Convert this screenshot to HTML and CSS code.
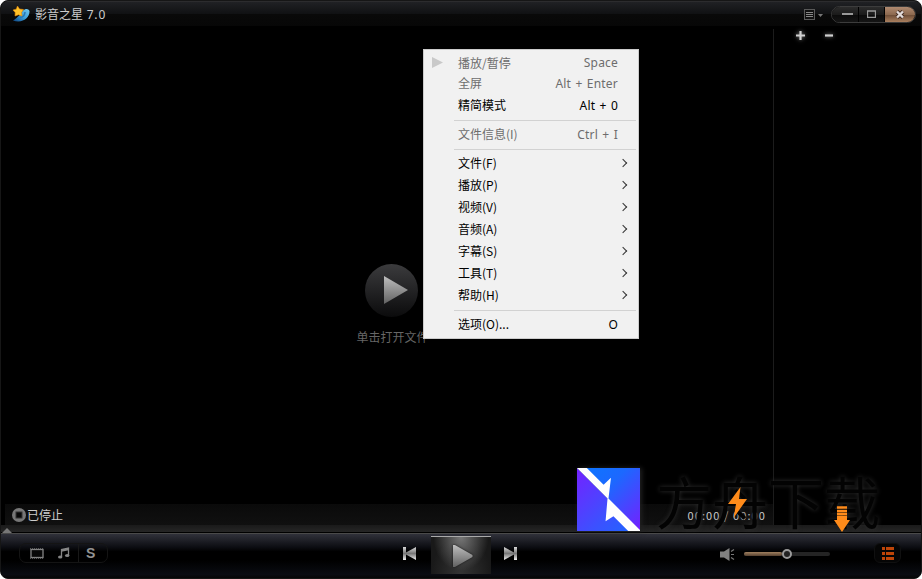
FILE: index.html
```html
<!DOCTYPE html>
<html lang="zh-CN">
<head>
    <meta charset="UTF-8">
    <meta name="viewport" content="width=device-width, initial-scale=1.0">
    <title>影音之星 7.0</title>
    <link rel="stylesheet" href="styles.css">
</head>
<body>
    <div class="player">
        <header class="titlebar">
            <svg class="logo" width="20" height="18" viewBox="0 0 20 18">
                <defs>
                    <linearGradient id="swoosh" x1="0" y1="1" x2="1" y2="0">
                        <stop offset="0" stop-color="#0b3f7c"/>
                        <stop offset=".5" stop-color="#3ba0dc"/>
                        <stop offset="1" stop-color="#75c9ee"/>
                    </linearGradient>
                </defs>
                <path d="M1 15.500C4 14 5 12 8 10C10 4 16 2 17.500 6C18 13 10 19 1 15.500Z" fill="url(#swoosh)"/>
                <path d="M8 12.500C11 12 13 10 13 7" fill="none" stroke="#2a79b5" stroke-width="1.500"/>
                <path d="M5.500 1L7.500 4L11.500 4.500L9.500 7.500L10 11L6.500 9.800L3 11L3.200 7.500L1 5L4.200 4.200Z" fill="#ffc229" stroke="#e58c09" stroke-width=".6"/>
            </svg>
            <h1 class="title">影音之星 <span class="version">7.0</span></h1>
            <svg class="menu-icon" width="20" height="11" viewBox="0 0 20 11">
                <rect x=".5" y=".5" width="10" height="10" fill="#111" stroke="#595959"/>
                <path d="M2 3.500H9M2 5.500H9M2 7.500H9" stroke="#888"/>
                <path d="M14 5H19L16.500 8Z" fill="#777"/>
            </svg>
            <div class="window-buttons">
                <button class="win-btn"><svg width="11" height="8"><path d="M0 4H11" stroke="#999" stroke-width="2"/></svg></button>
                <button class="win-btn"><svg width="9" height="8"><path d="M.5 1V7.500H8.500V1M0 1H9" fill="none" stroke="#999" stroke-width="1.300"/></svg></button>
                <button class="win-btn close"><svg width="10" height="9"><path d="M2 1.500L8 7.500M8 1.500L2 7.500" stroke="#422b20" stroke-width="4"/><path d="M2 1.500L8 7.500M8 1.500L2 7.500" stroke="#e4dcda" stroke-width="2.400"/></svg></button>
            </div>
        </header>

        <main class="content">
            <section class="video">
                <div class="open-file">
                    <svg width="53" height="53" viewBox="0 0 53 53">
                        <defs>
                            <linearGradient id="disc" x2="0" y2="1">
                                <stop offset="0" stop-color="#3b3b3d"/>
                                <stop offset="1" stop-color="#0b0b0c"/>
                            </linearGradient>
                            <linearGradient id="arrow" x2="0" y2="1">
                                <stop offset="0" stop-color="#bebebe"/>
                                <stop offset="1" stop-color="#626262"/>
                            </linearGradient>
                        </defs>
                        <circle cx="26.500" cy="26.500" r="26.500" fill="url(#disc)"/>
                        <path d="M19 12L43 26L19 40Z" fill="url(#arrow)"/>
                    </svg>
                    <p class="open-label">单击打开文件</p>
                </div>
                <div class="status">
                    <svg width="14" height="14"><circle cx="7" cy="7" r="7" fill="#777"/><rect x="4" y="4" width="6" height="6" fill="#080808" stroke="#333"/></svg>
                    <span class="state">已停止</span>
                    <span class="time">00:00 / 00:00</span>
                </div>
            </section>
            <aside class="playlist">
                <svg width="38" height="12" viewBox="0 0 38 12">
                    <path d="M0 5.500H9M4.500 1V10" stroke="#d0d0d0" stroke-width="2.200"/>
                    <path d="M29 5.500H37" stroke="#d0d0d0" stroke-width="2.200"/>
                </svg>
            </aside>
        </main>

        <div class="seekbar">
            <svg width="10" height="5"><path d="M0 5L5 0L10 5Z" fill="#777"/></svg>
        </div>

        <footer class="controls">
            <div class="modes">
                <svg class="mode" width="14" height="11" viewBox="0 0 14 11">
                    <rect x="1" y="1.500" width="12" height="8" fill="#080808" stroke="#858585" stroke-width="1.300"/>
                    <path d="M0 .8H14M0 10.200H14" stroke="#757575" stroke-dasharray="1 1"/>
                </svg>
                <svg class="mode" width="12" height="12" viewBox="0 0 12 12">
                    <path d="M3.500 10V2.500L10.500 1V8.500M3.500 4L10.500 2.500" fill="none" stroke="#858585" stroke-width="1.300"/>
                    <ellipse cx="2.200" cy="10" rx="2.200" ry="1.500" fill="#858585"/>
                    <ellipse cx="9.200" cy="8.600" rx="2.200" ry="1.500" fill="#858585"/>
                </svg>
                <span class="mode skin">S</span>
            </div>
            <div class="transport">
                <svg width="13" height="13" viewBox="0 0 13 13">
                    <defs>
                        <linearGradient id="metal" x2="0" y2="1">
                            <stop offset="0" stop-color="#d8d8d8"/>
                            <stop offset=".5" stop-color="#777"/>
                            <stop offset="1" stop-color="#eee"/>
                        </linearGradient>
                    </defs>
                    <path d="M0 0H3V5.500L13 0V13L3 7.500V13H0Z" fill="url(#metal)"/>
                </svg>
                <button class="play">
                    <svg width="20" height="22" viewBox="0 0 20 22"><path d="M0 0H2L19.500 10V12L2 22H0Z" fill="url(#arrow)"/></svg>
                </button>
                <svg class="next" width="13" height="13" viewBox="0 0 13 13"><path d="M13 0H10V5.500L0 0V13L10 7.500V13H13Z" fill="url(#metal)"/></svg>
            </div>
            <div class="volume">
                <svg width="15" height="13" viewBox="0 0 15 13">
                    <path d="M0 3.500H4L9.500 0V13L4 9.500H0Z" fill="#808080"/>
                    <path d="M11 3.500L14 1.500M11 6.500H14M11 9.500L14 11.500" stroke="#777" stroke-width="1.200"/>
                </svg>
                <div class="slider"><div class="level"></div><div class="knob"></div></div>
            </div>
            <button class="list-btn">
                <svg width="12" height="13" viewBox="0 0 12 13"><path d="M0 1.500H3M4 1.500H12M0 6.500H3M4 6.500H12M0 11.500H3M4 11.500H12" stroke="#be4508" stroke-width="3"/></svg>
            </button>
        </footer>
    </div>

    <div class="context-menu">
        <div class="item disabled first"><svg class="item-icon" width="11" height="11"><path d="M0 0L11 5.500L0 11Z" fill="#c9c9c9"/></svg><span>播放/暂停</span><kbd>Space</kbd></div>
        <div class="item disabled"><span>全屏</span><kbd>Alt + Enter</kbd></div>
        <div class="item"><span>精简模式</span><kbd>Alt + 0</kbd></div>
        <hr>
        <div class="item disabled"><span>文件信息(I)</span><kbd>Ctrl + I</kbd></div>
        <hr>
        <div class="item sub"><span>文件(F)</span></div>
        <div class="item sub"><span>播放(P)</span></div>
        <div class="item sub"><span>视频(V)</span></div>
        <div class="item sub"><span>音频(A)</span></div>
        <div class="item sub"><span>字幕(S)</span></div>
        <div class="item sub"><span>工具(T)</span></div>
        <div class="item sub"><span>帮助(H)</span></div>
        <hr>
        <div class="item"><span>选项(O)...</span><kbd>O</kbd></div>
    </div>

    <div class="watermark">
        <svg class="mark" width="63" height="63" viewBox="0 0 64 64">
            <defs>
                <linearGradient id="upper" x1="0" y1="0" x2="1" y2="1">
                    <stop offset="0" stop-color="#0a78ff"/>
                    <stop offset=".4" stop-color="#1c68ff"/>
                    <stop offset="1" stop-color="#761fff"/>
                </linearGradient>
                <linearGradient id="lower" x1="0" y1="0" x2="1" y2="1">
                    <stop offset="0" stop-color="#7422ff"/>
                    <stop offset=".6" stop-color="#3d50ff"/>
                    <stop offset="1" stop-color="#1c6aff"/>
                </linearGradient>
            </defs>
            <path d="M0 0H64V64Z" fill="url(#upper)"/>
            <path d="M0 0V64H64Z" fill="url(#lower)"/>
            <path d="M0 0H10L27 17L34.500 10L32 31L64 63V64H52L37 49L29 54L31 31Z" fill="#fff"/>
        </svg>
        <span class="brand">方舟下载</span>
        <svg class="bolt" width="20" height="32" viewBox="0 0 20 32"><path d="M12.500 0L0 17H8L5.500 31L19 12H11Z" fill="#ff8b1a"/></svg>
        <svg class="down" width="16" height="26" viewBox="0 0 16 26"><path d="M3 1.500H13M3 5H13M3 8H13M3 11H13" stroke="#ff8b1a" stroke-width="2.300"/><path d="M3 12H13V14H16L8 26L0 14H3Z" fill="#ff8b1a"/></svg>
    </div>
</body>
</html>
```
FILE: styles.css
```css
* {
    box-sizing: border-box;
}

body {
    margin: 0;
    background: #fff;
    font-family: "Noto Sans CJK SC", sans-serif;
    font-size: 12px;
    overflow: hidden;
}

button {
    padding: 0;
    border: 0;
    background: none;
}

svg {
    display: block;
    flex: none;
}

.player {
    display: flex;
    flex-direction: column;
    width: 922px;
    height: 579px;
    border: 1px solid #161616;
    border-radius: 8px;
    background: #000;
    overflow: hidden;
}

.titlebar {
    display: flex;
    align-items: center;
    height: 25px;
    flex: none;
    padding: 0 5px 0 11px;
    border-top: 1px solid #2c2c2e;
    background: linear-gradient(#202124, #101113 50%, #090909 51%, #070707);
}

.title {
    margin: 0 auto 0 3px;
    font-size: 12px;
    font-weight: 400;
    color: #ccc;
}

.version {
    margin-left: 1px;
    font-family: "Noto Sans", sans-serif;
    letter-spacing: .8px;
}

.menu-icon {
    margin-right: 7px;
}

.window-buttons {
    display: flex;
    gap: 1px;
    height: 17px;
    border: 1px solid #3c3c3c;
    border-radius: 9px;
    background: #000;
    overflow: hidden;
}

.win-btn {
    display: flex;
    align-items: center;
    justify-content: center;
    width: 26px;
    padding-left: 5px;
    background: linear-gradient(#2c2c2c, #1b1b1b 50%, #0b0b0b 51%, #151515);
}

.win-btn:nth-child(2) {
    width: 25px;
    padding-left: 0;
}

.win-btn.close {
    width: 30px;
    padding: 0;
    background: linear-gradient(#b08a70, #8d6a50 50%, #6a4a34 51%, #aa805f);
}

.content {
    display: flex;
    flex: 1;
    min-height: 0;
}

.video {
    display: flex;
    flex-direction: column;
    width: 773px;
    margin-top: 3px;
    border-right: 1px solid #1c1c1c;
}

.open-file {
    display: flex;
    flex: 1;
    flex-direction: column;
    align-items: center;
    padding: 235px 0 0 9px;
}

.open-label {
    margin: 11px 0 0 2px;
    line-height: 18px;
    color: #666;
}

.status {
    display: flex;
    align-items: center;
    height: 21px;
    margin-left: 4px;
    padding: 0 7px;
    background: linear-gradient(#0a0a0a, #101010);
    color: #ccc;
}

.state {
    margin-left: 1px;
}

.time {
    margin-left: auto;
    font-size: 11px;
    letter-spacing: 1.1px;
}

.playlist {
    flex: 1;
    padding: 4px 0 0 22px;
}

.playlist svg {
    filter: drop-shadow(0 0 2px #888);
}

.seekbar {
    flex: none;
    height: 8px;
    padding: 3px 0 0 1px;
    border-bottom: 1px solid #000;
    background: linear-gradient(#1a1a1a, #262626);
}

.controls {
    display: grid;
    grid-template-columns: 402px 300px 155px 1fr;
    flex: none;
    height: 45px;
    border-top: 1px solid #4a4a4a;
    background: linear-gradient(#30313a, #0c0d12 30%, #000 40%, #000 60%, #0a0c12 92%, #060606);
}

.modes {
    display: flex;
    align-items: center;
    width: 89px;
    height: 20px;
    margin: 9px 0 0 18px;
    padding-left: 10px;
    border: 1px solid #141414;
    border-radius: 7px;
    background: linear-gradient(90deg, transparent 58px, #181818 58px 59px, transparent 59px);
}

.mode + .mode {
    margin-left: 14px;
}

.skin {
    font: bold 14px "Liberation Sans", sans-serif;
    color: #929292;
}

.modes .skin {
    margin-left: 16px;
}

.transport {
    display: flex;
    align-items: flex-start;
    gap: 15px;
}

.transport > svg {
    margin-top: 13px;
}

.transport .next {
    margin-left: -2px;
}

.play {
    display: flex;
    justify-content: center;
    width: 60px;
    height: 38px;
    margin-top: 2px;
    padding: 8px 0 0 3px;
    border-top: 1px solid #aaa;
    background: radial-gradient(ellipse at top, #777, transparent 65%), radial-gradient(ellipse at bottom, #343434, #191919 70%);
}

.play svg {
    filter: drop-shadow(0 0 1px #111);
}

.volume {
    display: flex;
    align-items: center;
    height: 26px;
    margin: 7px 0 0 17px;
}

.slider {
    display: flex;
    align-items: center;
    width: 86px;
    height: 4px;
    margin-left: 9px;
    border-radius: 2px;
    background: #242424;
}

.level {
    width: 38px;
    height: 4px;
    border-radius: 2px;
    background: linear-gradient(#a0805f, #55402f);
}

.knob {
    width: 10px;
    height: 10px;
    border: 2px solid #9a9a9a;
    border-radius: 50%;
    background: #222;
}

.list-btn {
    display: flex;
    align-items: center;
    justify-content: center;
    width: 27px;
    height: 20px;
    margin: 9px 0 0 16px;
    border: 1px solid #101010;
    border-radius: 6px;
    background: #050505;
}

.context-menu {
    position: absolute;
    top: 49px;
    left: 423px;
    width: 216px;
    height: 290px;
    padding: 2px 2px 0 3px;
    border: 1px solid #ccc;
    background: #f1f1f1;
    color: #000;
}

.item {
    display: flex;
    align-items: center;
    height: 22px;
    padding: 0 18px 2px 31px;
    line-height: 20px;
    white-space: nowrap;
}

.item.first {
    height: 21px;
    padding-left: 5px;
    padding-bottom: 0;
}

.item-icon {
    margin-right: 15px;
}

.item.disabled {
    color: #6d6d6d;
}

.item kbd {
    margin-left: auto;
    font: 12px "Noto Sans", sans-serif;
    letter-spacing: .2px;
    word-spacing: 1px;
}

.item.sub::after {
    content: "";
    width: 5px;
    height: 5px;
    margin: 0 -8px 0 auto;
    border: solid #333;
    border-width: 1px 1px 0 0;
    transform: rotate(45deg);
}

.context-menu hr {
    height: 1px;
    margin: 3px 0 3px 27px;
    border: 0;
    background: #d2d2d2;
}

.watermark {
    position: absolute;
    top: 468px;
    left: 577px;
    width: 305px;
    height: 66px;
}

.mark {
    box-shadow: 2px 0 5px #222;
}

.brand {
    position: absolute;
    top: 0;
    left: 79px;
    font-size: 56px;
    line-height: 64px;
    color: #030303;
    text-shadow: 0 0 5px #303030;
}

.bolt {
    position: absolute;
    top: 19px;
    left: 151px;
}

.down {
    position: absolute;
    top: 38px;
    left: 257px;
}
```
